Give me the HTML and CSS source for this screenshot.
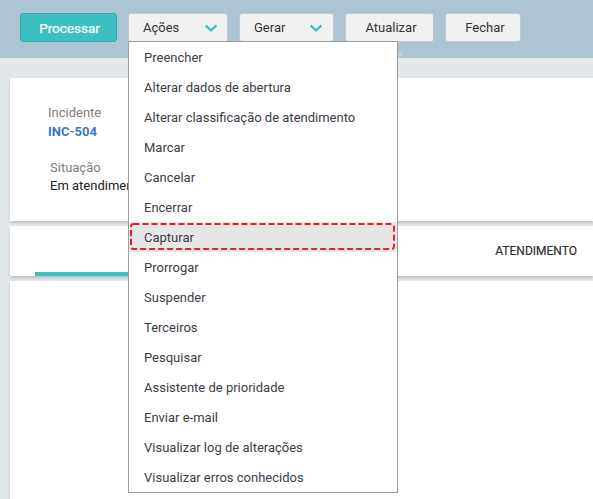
FILE: index.html
```html
<!DOCTYPE html>
<html lang="pt-BR">
<head>
<meta charset="utf-8">
<title>Incidente INC-504</title>
<link rel="stylesheet" href="styles.css">
</head>
<body>
<div class="app">
  <header class="toolbar">
    <button class="btn btn-primary">Processar</button>
    <div class="dd">
      <button class="btn btn-dd btn-acoes">Ações
        <svg class="chev" width="14" height="8" viewBox="0 0 14 8"><path d="M1.6 1.4 L7 6.4 L12.4 1.4" fill="none" stroke="#3cc0c1" stroke-width="2.2"/></svg>
      </button>
      <ul class="menu">
        <li class="menu-item">Preencher</li>
        <li class="menu-item">Alterar dados de abertura</li>
        <li class="menu-item">Alterar classificação de atendimento</li>
        <li class="menu-item">Marcar</li>
        <li class="menu-item">Cancelar</li>
        <li class="menu-item">Encerrar</li>
        <li class="menu-item is-focused">Capturar
          <svg class="focus-ring" width="265" height="27" viewBox="0 0 265 27"><rect x="1" y="1" width="263" height="25" rx="2.5" fill="none" stroke="#e8212b" stroke-width="2" stroke-dasharray="6 3"/></svg>
        </li>
        <li class="menu-item">Prorrogar</li>
        <li class="menu-item">Suspender</li>
        <li class="menu-item">Terceiros</li>
        <li class="menu-item">Pesquisar</li>
        <li class="menu-item">Assistente de prioridade</li>
        <li class="menu-item">Enviar e-mail</li>
        <li class="menu-item">Visualizar log de alterações</li>
        <li class="menu-item">Visualizar erros conhecidos</li>
      </ul>
    </div>
    <button class="btn btn-dd btn-gerar">Gerar
      <svg class="chev" width="14" height="8" viewBox="0 0 14 8"><path d="M1.6 1.4 L7 6.4 L12.4 1.4" fill="none" stroke="#3cc0c1" stroke-width="2.2"/></svg>
    </button>
    <button class="btn btn-atualizar">Atualizar</button>
    <button class="btn btn-fechar">Fechar</button>
    <span class="scroll-arrow"></span>
  </header>
  <main class="content">
    <section class="card card-info">
      <div class="field">
        <div class="field-label">Incidente</div>
        <div class="field-value field-link">INC-504</div>
      </div>
      <div class="field field-status">
        <div class="field-label">Situação</div>
        <div class="field-value">Em atendimento</div>
      </div>
    </section>
    <section class="card card-tabs">
      <div class="tab tab-active"></div>
      <div class="tab tab-label">ATENDIMENTO</div>
    </section>
    <section class="card card-body"></section>
  </main>
</div>
</body>
</html>
```
FILE: styles.css
```css
* {
  box-sizing: border-box;
  margin: 0;
  padding: 0;
}

html, body {
  width: 593px;
  height: 499px;
  overflow: hidden;
}

body {
  font-family: Roboto, "Liberation Sans", Arial, sans-serif;
  background: #e3e8ea;
}

.app {
  display: flex;
  flex-direction: column;
  height: 100%;
}

.toolbar {
  position: relative;
  height: 58px;
  flex: none;
  background: #adc5d2;
  display: flex;
  align-items: flex-start;
  gap: 11px;
  padding: 13px 0 0 20px;
  z-index: 2;
}

.btn {
  height: 29px;
  font-family: inherit;
  font-size: 13px;
  color: #333;
  background: #f1f1f1;
  border: 1px solid #c2cbd1;
  border-radius: 3px;
  display: flex;
  align-items: center;
  justify-content: center;
}

.btn-primary {
  width: 97px;
  padding-left: 2px;
  background: #3bbfc0;
  border-color: #2faaab;
  color: #fff;
  font-size: 13.5px;
  font-weight: 400;
  -webkit-text-stroke: 0.25px #fff;
}

.btn-dd {
  justify-content: space-between;
  padding: 0 9px 0 14px;
}

.btn-acoes { width: 100px; }
.btn-gerar { width: 95px; padding-right: 10px; }
.btn-atualizar { width: 89px; padding-left: 3px; }
.btn-fechar { width: 76px; padding-left: 4px; }

.chev {
  display: block;
  margin-top: 1px;
}

.dd {
  position: relative;
}

.menu {
  position: absolute;
  top: 28px;
  left: 0;
  width: 270px;
  list-style: none;
  background: #fff;
  border: 1px solid #9d9d9d;
  z-index: 5;
}

.menu-item {
  position: relative;
  height: 30px;
  padding: 2px 0 0 15px;
  line-height: 28px;
  font-size: 13px;
  color: #3d3d46;
  white-space: nowrap;
}

.is-focused {
  background: #e7e7e7;
}

.focus-ring {
  position: absolute;
  left: 1px;
  top: 1px;
}

.scroll-arrow {
  position: absolute;
  left: 399px;
  top: 51px;
  width: 0;
  height: 0;
  border-left: 4px solid #c4d4dd;
  border-top: 3.5px solid transparent;
  border-bottom: 3.5px solid transparent;
}

.content {
  flex: 1;
  display: flex;
  flex-direction: column;
  gap: 5px;
  padding: 20px 0 0 10px;
}

.card {
  background: #fff;
  box-shadow: 0 2px 3px rgba(0, 0, 0, 0.18);
}

.card-info {
  height: 143px;
  padding: 27px 0 0 38px;
}

.field-label {
  font-size: 13px;
  line-height: 15px;
  color: #7d7d7d;
}

.field-value {
  margin-top: 3px;
  font-size: 13px;
  line-height: 15px;
  color: #222;
}

.field-link {
  margin-top: 4px;
  font-weight: 700;
  color: #3a7bbf;
}

.field-status {
  margin: 21px 0 0 2px;
}

.card-tabs {
  height: 50px;
  display: flex;
  justify-content: space-between;
  padding: 0 16px 0 25px;
}

.tab {
  height: 50px;
}

.tab-active {
  width: 240px;
  border-bottom: 4px solid #3bbfc0;
}

.tab-label {
  line-height: 50px;
  font-size: 12px;
  font-weight: 400;
  color: #2e2e2e;
  -webkit-text-stroke: 0.2px #2e2e2e;
}

.card-body {
  flex: 1;
}
```
